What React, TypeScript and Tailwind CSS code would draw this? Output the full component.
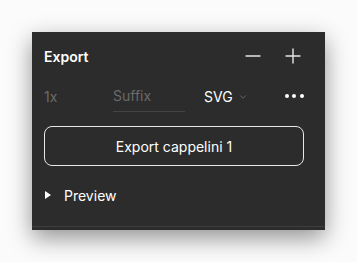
import { Minus, Plus, ChevronDown } from 'lucide-react';

export default function App() {
  return (
    <div className="w-[357px] h-[262px] bg-[#fbfbfb] pt-[32px] pl-[32px] font-['Inter','Liberation_Sans',sans-serif]">
      <div className="w-[293px] h-[198px] bg-[#2c2c2c] shadow-[0_8px_22px_rgba(0,0,0,0.42)] flex flex-col">
        {/* header */}
        <div className="h-[48px] flex items-center pl-[12px] pr-[20px]">
          <span className="text-[14px] font-semibold text-white">Export</span>
          <div className="ml-auto flex items-center gap-[16px] text-[#e6e6e6]">
            <Minus size={24} strokeWidth={1.4} />
            <Plus size={24} strokeWidth={1.4} />
          </div>
        </div>

        {/* settings row */}
        <div className="h-[32px] flex items-center pl-[12px] text-[14px]">
          <span className="w-[69px] text-[#6a6a6a]">1x</span>
          <div className="w-[72px] h-[32px] flex items-center border-b border-[#444444] text-[#6a6a6a]">
            Suffix
          </div>
          <div className="ml-[19px] flex items-center gap-[5px] text-white">
            SVG
            <ChevronDown size={10} strokeWidth={1.5} className="text-[#8a8a8a] mt-[1px]" />
          </div>
          <div className="ml-[37px] flex items-center gap-[3.5px]">
            <span className="w-[4px] h-[4px] rounded-full bg-white" />
            <span className="w-[4px] h-[4px] rounded-full bg-white" />
            <span className="w-[4px] h-[4px] rounded-full bg-white" />
          </div>
        </div>

        {/* export button */}
        <div className="px-[12px] mt-[14px]">
          <button className="w-[260px] h-[40px] rounded-[8px] border border-[#e8e8e8] text-[14px] text-white">
            Export cappelini 1
          </button>
        </div>

        {/* preview */}
        <div className="mt-[14px] h-[30px] flex items-center pl-[13px] text-[14px] text-white">
          <svg width="6" height="8" viewBox="0 0 6 8" className="mr-[13px]">
            <path d="M0 0 L6 4 L0 8 Z" fill="#ffffff" />
          </svg>
          Preview
        </div>

        <div className="mt-auto mb-[3px] h-px bg-[#3e3e3e]" />
      </div>
    </div>
  );
}
